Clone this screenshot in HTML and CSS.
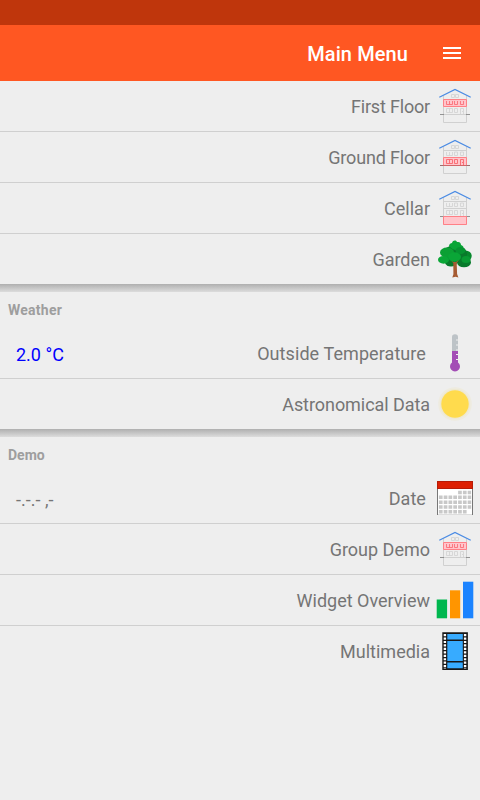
FILE: index.html
```html
<!DOCTYPE html>
<html lang="en">
<head>
<meta charset="utf-8">
<title>Main Menu</title>
<link rel="stylesheet" href="styles.css">
</head>
<body>
<svg class="defs" width="0" height="0" aria-hidden="true">
  <symbol id="house" viewBox="0 0 50 50">
    <g fill="none" stroke="#d0d0d0">
      <path d="M13.5 13.5V40.500H36.500V13.500M13.500 17.500h23M13.500 24.500h23M13.500 32.500h23"/>
      <path stroke-width=".8" d="M21.500 12.500h3v3h-3zM25.500 12.500h3v3h-3zM16.500 19v3.500h6V19M19.500 19v3.500M24.500 19v3.500h3V19zM30.500 19v3.500h3V19zM16.500 26.500h6v4h-6zM19.500 26.500v4M24.500 26.500h3v4h-3zM30.500 32v-5.500h3V32M32 29.500h1"/>
    </g>
    <path d="M10 32.500h4M36 32.500h4" stroke="#888" stroke-width=".9"/>
    <path d="M9.300 15.300 25 7.500l15.700 7.800" fill="none" stroke="#4a8be4" stroke-width="1.250"/>
  </symbol>
  <symbol id="house-first" viewBox="0 0 50 50">
    <use href="#house"/>
    <path d="M13.500 17.500h23v7h-23z" fill="#ffc5cb" stroke="#ff8086"/>
    <path d="M16.500 19v3.500h6V19M19.500 19v3.500M24.500 19v3.500h3V19M30.500 19v3.500h3V19" fill="none" stroke="#f9666d" stroke-width=".8"/>
  </symbol>
</svg>

<div class="status"></div>
<header class="bar">
  <h1 class="title">Main Menu</h1>
  <svg class="burger" viewBox="0 0 18 12"><path d="M0 1h18M0 6h18M0 11h18" stroke="#fff" stroke-width="2"/></svg>
</header>

<main>
  <section class="group">
    <div class="row"><span class="label tight">First Floor</span><svg class="icon" viewBox="0 -1 50 50"><use href="#house-first" width="50" height="50"/></svg></div>
    <div class="row"><span class="label tight">Ground Floor</span>
      <svg class="icon" viewBox="0 -1 50 50"><use href="#house" width="50" height="50"/>
        <path d="M13.500 24.500h23v8h-23z" fill="#ffc5cb" stroke="#ff8086"/>
        <path d="M16.500 26.500h6v4h-6zM19.500 26.500v4M24.500 26.500h3v4h-3zM30.500 32v-5.500h3V32M32 29.500h1" fill="none" stroke="#f9666d" stroke-width=".9"/>
        <path d="M10 32.500h30" stroke="#a34b4b" stroke-width=".5"/>
      </svg></div>
    <div class="row"><span class="label">Cellar</span>
      <svg class="icon" viewBox="0 -1 50 50"><use href="#house" width="50" height="50"/>
        <path d="M13.500 32.500h23v8h-23z" fill="#ffc5cb" stroke="#ff8086"/>
      </svg></div>
    <div class="row"><span class="label">Garden</span>
      <svg class="icon" viewBox="0 0 50 50">
        <ellipse cx="34" cy="28.500" rx="7" ry="4.800" fill="#087a2b"/>
        <ellipse cx="21" cy="28.500" rx="6" ry="4" fill="#087a2b"/>
        <ellipse cx="35.500" cy="22" rx="6.200" ry="5.500" fill="#07882d"/>
        <ellipse cx="25" cy="20" rx="12" ry="9" fill="#087a2b"/>
        <path d="M19 12c0-2 2-3 3-3 1-3 4-3 5-1 3-.5 4 1 4 3 3 1 3 3 1 4-4 3-10 1-13-3z" fill="#08a536"/>
        <ellipse cx="17" cy="18.500" rx="7" ry="5" fill="#0ba034"/>
        <ellipse cx="30.500" cy="16.500" rx="5" ry="3.500" fill="#069331"/>
        <ellipse cx="13.500" cy="25.800" rx="5.500" ry="3.900" fill="#0aa637"/>
        <ellipse cx="24.500" cy="23" rx="6.500" ry="4.700" fill="#0aa637"/>
        <ellipse cx="36" cy="25.500" rx="4.500" ry="3.500" fill="#099a33"/>
        <path d="m23.300 29-2-2 2.200 1.100h2.500l2.700-2.200-2 3.400.4 10.700 1.300 3.500-2.800-.7-3.300.6 1.100-3.100z" fill="#a65b32"/>
      </svg></div>
  </section>
  <div class="shade"></div>

  <section class="group">
    <h2 class="heading loose">Weather</h2>
    <div class="row row-value"><span class="value blue">2.0 °C</span><span class="label wide">Outside Temperature</span>
      <svg class="icon" viewBox="0 0 50 50">
        <path d="M22 24V9q0-2.800 3-2.800T28 9v2.500h-2v1h2v4h-2v1h2v4h-2v1h2V24z" fill="#bdc3c7"/>
        <path d="M22 23h6v3h-2v1h2v4h-2v1h2v2.500a5 5 0 1 1-6 0z" fill="#a34db5"/>
      </svg></div>
    <div class="row"><span class="label snug">Astronomical Data</span>
      <svg class="icon" viewBox="0 0 50 50">
        <circle cx="25" cy="25" r="16.800" fill="#eeebdf"/>
        <circle cx="25" cy="25" r="15" fill="#eee8cf"/>
        <circle cx="25" cy="25" r="13.700" fill="#ffdb4d"/>
      </svg></div>
  </section>
  <div class="shade"></div>

  <section class="group">
    <h2 class="heading">Demo</h2>
    <div class="row row-value"><span class="value">-.-.- ,-</span><span class="label wide">Date</span>
      <svg class="icon" viewBox="0 0 50 50">
        <path d="M7 8h36v34H7z" fill="#fff"/>
        <path d="M8 41h34v1H8z" fill="#ddd"/>
        <path d="M7.500 16v26M42.500 16v26" stroke="#777"/>
        <path d="M7 8h36v8H7z" fill="#b71b06"/>
        <path d="M8 9h34v6H8z" fill="#dd2003"/>
        <g stroke="#c8c8c8" stroke-width="3.400" stroke-dasharray="3.700 1.100">
          <path d="M28.100 19.500h13"/>
          <path d="M8.900 24.300h32.300"/>
          <path d="M8.900 29.200h32.300"/>
          <path d="M8.900 34h32.300"/>
          <path d="M8.900 38.800h27.700"/>
        </g>
      </svg></div>
    <div class="row"><span class="label">Group Demo</span><svg class="icon" viewBox="0 -1 50 50"><use href="#house-first" width="50" height="50"/></svg></div>
    <div class="row"><span class="label">Widget Overview</span>
      <svg class="icon" viewBox="0 0 50 50">
        <path d="M6.700 24.500h10.400v18.800H6.700z" fill="#00b74f"/>
        <path d="M20 15.300h10.200v28H20z" fill="#ff9500"/>
        <path d="M33 6.700h10.300v36.600H33z" fill="#1b83ff"/>
      </svg></div>
    <div class="row"><span class="label">Multimedia</span>
      <svg class="icon" viewBox="0 0 50 50">
        <path d="M12.300 6.300h25.600v37.600H12.300z" fill="#171717"/>
        <path d="M17.300 8h15.500v5.500H17.300zM17.300 15h15.500v20H17.300zM17.300 36.500h15.500v5.800H17.300z" fill="#37abff"/>
        <path d="M14.900 8v35M35.100 8v35" stroke="#fff" stroke-width="2.400" stroke-dasharray="2.200 1.250"/>
      </svg></div>
  </section>
</main>
</body>
</html>
```

FILE: styles.css
```css
* { box-sizing: border-box; }

body {
  margin: 0;
  min-height: 800px;
  background: #eee;
  color: #757575;
  font-family: Roboto, sans-serif;
}

.defs { display: none; }

.status { height: 25px; background: #bf360c; }

.bar {
  display: flex;
  align-items: center;
  justify-content: flex-end;
  gap: 35px;
  height: 56px;
  padding-right: 19px;
  background: #ff5722;
}

.title {
  margin: 0;
  padding-top: 2px;
  color: #fff;
  font-size: 20px;
  font-weight: 500;
  letter-spacing: 0.1px;
  line-height: 24px;
}

.burger { width: 18px; height: 12px; }

.row {
  display: flex;
  align-items: center;
  height: 50px;
  font-size: 18px;
}

.row + .row {
  height: 51px;
  border-top: 1px solid #cfcfcf;
}

.label {
  margin-left: auto;
  padding-top: 2px;
  line-height: 24px;
  white-space: pre;
}

.tight { letter-spacing: -0.18px; }
.snug { letter-spacing: -0.06px; }
.wide { letter-spacing: 0.08px; }

.row-value .label { padding-right: 4px; }

.value { padding: 3px 0 0 16px; line-height: 24px; }

.blue { color: #00f; }

.icon { flex: none; width: 50px; height: 50px; }

.heading {
  height: 36px;
  margin: 0;
  padding: 0 8px;
  color: #9e9e9e;
  font-size: 14px;
  font-weight: 700;
  line-height: 37px;
}

.loose { letter-spacing: 0.25px; }

.shade {
  height: 8px;
  background: linear-gradient(#afafaf, #dcdcdc);
}
```
